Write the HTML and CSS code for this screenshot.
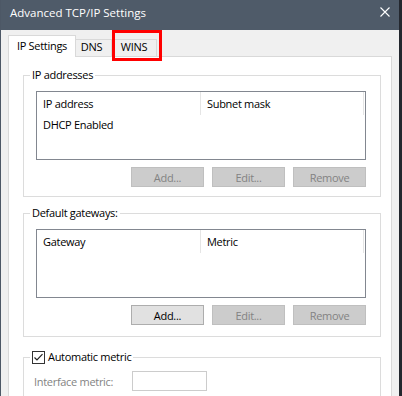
FILE: index.html
```html
<!DOCTYPE html>
<html>
<head>
  <title>Advanced TCP/IP Settings</title>
  <meta charset="UTF-8">
  <link rel="stylesheet" href="styles.css">
</head>
<body>
  <div class="window">
    <div class="titlebar">
      <span class="title">Advanced TCP/IP Settings</span>
      <svg class="close" width="10" height="10" viewBox="0 0 10 10">
        <path d="M0.5 0.5 L9.5 9.5 M9.5 0.5 L0.5 9.5" stroke="#fff" stroke-width="1.1" fill="none"/>
      </svg>
    </div>

    <div class="dialog">
      <div class="tabs">
        <div class="tab active">IP Settings</div>
        <div class="tab tab-dns">DNS</div>
        <div class="tab tab-wins">WINS</div>
        <div class="highlight"></div>
      </div>

      <div class="panel">
        <fieldset class="group">
          <legend>IP addresses</legend>
          <div class="list">
            <div class="list-head">
              <div class="col col-1">IP address</div>
              <div class="col col-2">Subnet mask</div>
            </div>
            <div class="list-row">
              <div class="col">DHCP Enabled</div>
            </div>
          </div>
          <div class="buttons">
            <button disabled>Add...</button>
            <button disabled>Edit...</button>
            <button disabled>Remove</button>
          </div>
        </fieldset>

        <fieldset class="group group-gw">
          <legend>Default gateways:</legend>
          <div class="list">
            <div class="list-head">
              <div class="col col-1">Gateway</div>
              <div class="col col-2">Metric</div>
            </div>
          </div>
          <div class="buttons">
            <button>Add...</button>
            <button disabled>Edit...</button>
            <button disabled>Remove</button>
          </div>
        </fieldset>

        <fieldset class="group group-metric">
          <legend class="check-legend">
            <svg class="checkbox" width="13" height="13" viewBox="0 0 13 13">
              <rect x="0.5" y="0.5" width="12" height="12" fill="#fff" stroke="#333"/>
              <path d="M2.5 6.5 L5 9 L10.5 3.2" stroke="#222" stroke-width="1.2" fill="none"/>
            </svg>
            <span>Automatic metric</span>
          </legend>
          <div class="metric-row">
            <span class="metric-label">Interface metric:</span>
            <input type="text" class="metric-input" disabled>
          </div>
        </fieldset>
      </div>
    </div>
  </div>
</body>
</html>
```

FILE: styles.css
```css
body {
  margin: 0;
  font-family: "Open Sans", "Noto Sans", sans-serif;
  font-size: 11px;
  letter-spacing: -0.3px;
  color: #000;
  background: #f0f0f0;
}
.window {
  width: 402px;
  height: 396px;
  box-sizing: border-box;
  border-left: 1px solid #4d5866;
  border-right: 3px solid #23272e;
  background: #f0f0f0;
  overflow: hidden;
}
.titlebar {
  height: 30px;
  box-sizing: border-box;
  background: #4f5b69;
  color: #fff;
  display: flex;
  align-items: flex-start;
  justify-content: space-between;
  padding: 5px 9px 0 9px;
}
.title {
  font-size: 11.5px;
  line-height: 16px;
  letter-spacing: 0;
}
.close {
  margin-top: 2px;
}
.dialog {
  padding: 5px 7px 0 7px;
}
.tabs {
  position: relative;
  display: flex;
  align-items: flex-end;
  height: 21px;
}
.tab {
  box-sizing: border-box;
  text-align: center;
  background: #f0f0f0;
  border-top: 1px solid #d9d9d9;
  border-right: 1px solid #d9d9d9;
  line-height: 13px;
  padding-bottom: 3px;
}
.tab.active {
  position: relative;
  z-index: 1;
  width: 68px;
  background: #fff;
  border-left: 1px solid #d9d9d9;
  line-height: 16px;
  padding-top: 2px;
  padding-bottom: 3px;
  margin-bottom: -1px;
}
.tab-dns {
  width: 36px;
  padding-right: 4px;
}
.tab-wins {
  width: 45px;
}
.highlight {
  position: absolute;
  left: 104px;
  top: -5px;
  width: 50px;
  height: 31px;
  box-sizing: border-box;
  border: 3px solid #f00;
  z-index: 2;
}
.panel {
  height: 360px;
  background: #fff;
  border: 1px solid #d9d9d9;
  padding: 10px 0 0 14px;
}
.group {
  width: 358px;
  box-sizing: border-box;
  margin: 0;
  padding: 0 0 9px 0;
  border: 1px solid #dcdcdc;
}
.group legend {
  margin-left: 6px;
  padding: 0 2px;
  line-height: 16px;
}
.group-gw {
  margin-top: 8px;
  padding-bottom: 11px;
}
.group-metric {
  margin-top: 12px;
}
.list {
  width: 330px;
  height: 69px;
  box-sizing: border-box;
  margin: 8px 0 0 12px;
  border: 1px solid #828790;
}
.list-head {
  display: flex;
  height: 23px;
  line-height: 23px;
}
.col {
  box-sizing: border-box;
  padding-left: 6px;
}
.col-1 {
  width: 164px;
  border-right: 1px solid #e5e5e5;
}
.col-2 {
  width: 163px;
  border-right: 1px solid #e5e5e5;
}
.list-row {
  line-height: 19px;
}
.buttons {
  display: flex;
  justify-content: flex-end;
  gap: 8px;
  width: 330px;
  margin: 7px 0 0 12px;
}
button {
  width: 73px;
  height: 20px;
  box-sizing: border-box;
  padding: 2px 0 0 0;
  font-family: inherit;
  font-size: 11px;
  letter-spacing: inherit;
  line-height: 16px;
  color: #000;
  background: #e1e1e1;
  border: 1px solid #adadad;
}
button:disabled {
  color: #838383;
  background: #cccccc;
  border-color: #bfbfbf;
}
.check-legend {
  display: flex;
  align-items: center;
  gap: 3px;
}
.checkbox {
  display: block;
}
.metric-row {
  display: flex;
  align-items: center;
  margin: 6px 0 0 10px;
}
.metric-label {
  width: 98px;
  color: #838383;
}
.metric-input {
  width: 75px;
  height: 20px;
  box-sizing: border-box;
  margin: 0;
  border: 1px solid #cccccc;
  background: #fff;
}
```
